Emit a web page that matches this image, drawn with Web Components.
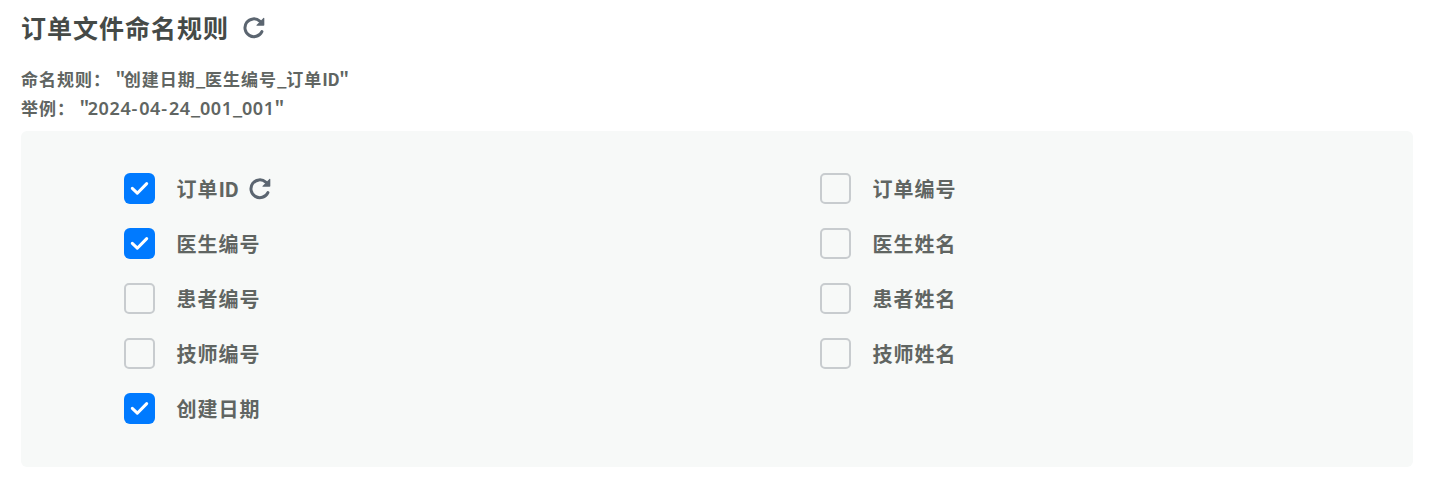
<!DOCTYPE html>
<html lang="zh-CN">
<head>
<meta charset="UTF-8">
<title>订单文件命名规则</title>
<style>
    body {
        margin: 0;
        background: #fff;
        font-family: 'Noto Sans CJK SC', sans-serif;
        font-weight: 700;
    }
</style>
</head>
<body>
<naming-rules></naming-rules>

<script>
const refreshTemplate = document.createElement('template');
refreshTemplate.innerHTML = `
    <style>
        :host {
            display: block;
            width: 22px;
            height: 22px;
            color: #5b6570;
            cursor: pointer;
        }
        svg {
            display: block;
        }
    </style>
    <svg width='22' height='22' viewBox='0 0 22 22'>
        <path d='M18.9 14.6A8.9 8.9 0 1 1 16.8 4.1' fill='none' stroke='currentColor' stroke-width='3' stroke-linecap='round'/>
        <path d='M20.4 .9Q21.3 .4 21.3 1.4V7.9Q21.3 8.7 20.5 8.7H13.9Q12.9 8.7 13.6 7.9Z' fill='currentColor'/>
    </svg>
`

class RefreshIcon extends HTMLElement{
    constructor(){
        super();
        this.attachShadow({mode : 'open'});
        this.shadowRoot.appendChild(refreshTemplate.content.cloneNode(true));
    }
}

const ruleOptionTemplate = document.createElement('template');
ruleOptionTemplate.innerHTML = `
    <style>
        :host {
            display: flex;
            align-items: center;
            height: 31px;
            cursor: pointer;
        }
        .box {
            box-sizing: border-box;
            width: 31px;
            height: 31px;
            margin-right: 21.5px;
            border: 2px solid #c8cccf;
            border-radius: 5px;
        }
        svg {
            display: none;
        }
        :host([checked]) .box {
            border: none;
            background: #007aff;
            border-radius: 6px;
        }
        :host([checked]) svg {
            display: block;
        }
        .label {
            font-size: 20px;
            line-height: 31px;
            letter-spacing: 1px;
            color: #606562;
        }
        ::slotted(.latin) {
            font-size: 20px;
            line-height: 31px;
            letter-spacing: -.5px;
            color: #606562;
        }
        ::slotted(refresh-icon) {
            margin-left: 10.5px;
        }
    </style>
    <div class='box'>
        <svg width='31' height='31' viewBox='0 0 31 31'>
            <path d='M8.3 15.4L13.3 20.2L22.7 10.6' fill='none' stroke='#fff' stroke-width='3' stroke-linecap='round' stroke-linejoin='round'/>
        </svg>
    </div>
    <div class='label'></div>
    <slot></slot>
`

class RuleOption extends HTMLElement{
    constructor(){
        super();
        this.attachShadow({mode : 'open'});
        this.shadowRoot.appendChild(ruleOptionTemplate.content.cloneNode(true));
    }

    connectedCallback(){
        this.shadowRoot.querySelector('.label').textContent = this.getAttribute('label');
        this.addEventListener('click', this.toggle);
    }

    disconnectedCallback(){
        this.removeEventListener('click', this.toggle);
    }

    toggle(){
        this.toggleAttribute('checked');
    }
}

const namingRulesTemplate = document.createElement('template');
namingRulesTemplate.innerHTML = `
    <style>
        :host {
            display: block;
            padding: 7px 21px 0;
        }
        header {
            display: flex;
            align-items: center;
            gap: 14px;
            height: 40px;
        }
        header refresh-icon {
            margin-top: 2px;
        }
        h1 {
            margin: 0;
            font-size: 25px;
            line-height: 40px;
            letter-spacing: 1px;
            color: #454a47;
        }
        .rule {
            display: flex;
            height: 29px;
            line-height: 29px;
            font-size: 17px;
            letter-spacing: 1px;
            color: #606562;
            white-space: nowrap;
        }
        .summary {
            padding-top: 17px;
        }
        .value {
            margin-left: 4.5px;
        }
        /* latin characters are set tighter than the chinese ones */
        .value i {
            font-style: normal;
            letter-spacing: -.4px;
        }
        .value i:first-child {
            letter-spacing: -1.6px;
        }
        .value b {
            font-family: 'Noto Sans', sans-serif;
            font-weight: 600;
            font-size: 18px;
            line-height: 1;
            letter-spacing: .6px;
        }
        .value u {
            text-decoration: none;
            letter-spacing: 1.6px;
        }
        .panel {
            display: grid;
            grid-template-columns: 1fr 1fr;
            box-sizing: border-box;
            height: 336px;
            margin-top: 9px;
            padding: 42px 0 0;
            background: #f7f9f8;
            border-radius: 6px;
        }
        .column {
            display: flex;
            flex-direction: column;
            gap: 24px;
            padding-left: 103px;
        }
    </style>
    <header>
        <h1>订单文件命名规则</h1>
        <refresh-icon></refresh-icon>
    </header>
    <div class='summary'>
        <div class='rule'><span>命名规则：</span><span class='value'><i>"</i>创建日期<i>_</i>医生编号<i>_</i>订单<i>ID"</i></span></div>
        <div class='rule'><span>举例：</span><span class='value'><i>"</i><b>2024</b><u>-</u><b>04</b><u>-</u><b>24</b><i>_</i><b>001</b><i>_</i><b>001</b><i>"</i></span></div>
    </div>
    <div class='panel'>
        <div class='column'>
            <rule-option label='订单' checked><span class='latin'>ID</span><refresh-icon></refresh-icon></rule-option>
            <rule-option label='医生编号' checked></rule-option>
            <rule-option label='患者编号'></rule-option>
            <rule-option label='技师编号'></rule-option>
            <rule-option label='创建日期' checked></rule-option>
        </div>
        <div class='column'>
            <rule-option label='订单编号'></rule-option>
            <rule-option label='医生姓名'></rule-option>
            <rule-option label='患者姓名'></rule-option>
            <rule-option label='技师姓名'></rule-option>
        </div>
    </div>
`

class NamingRules extends HTMLElement{
    constructor(){
        super();
        this.attachShadow({mode : 'open'});
        this.shadowRoot.appendChild(namingRulesTemplate.content.cloneNode(true));
    }
}

window.customElements.define('refresh-icon', RefreshIcon)
window.customElements.define('rule-option', RuleOption)
window.customElements.define('naming-rules', NamingRules)
</script>
</body>
</html>
